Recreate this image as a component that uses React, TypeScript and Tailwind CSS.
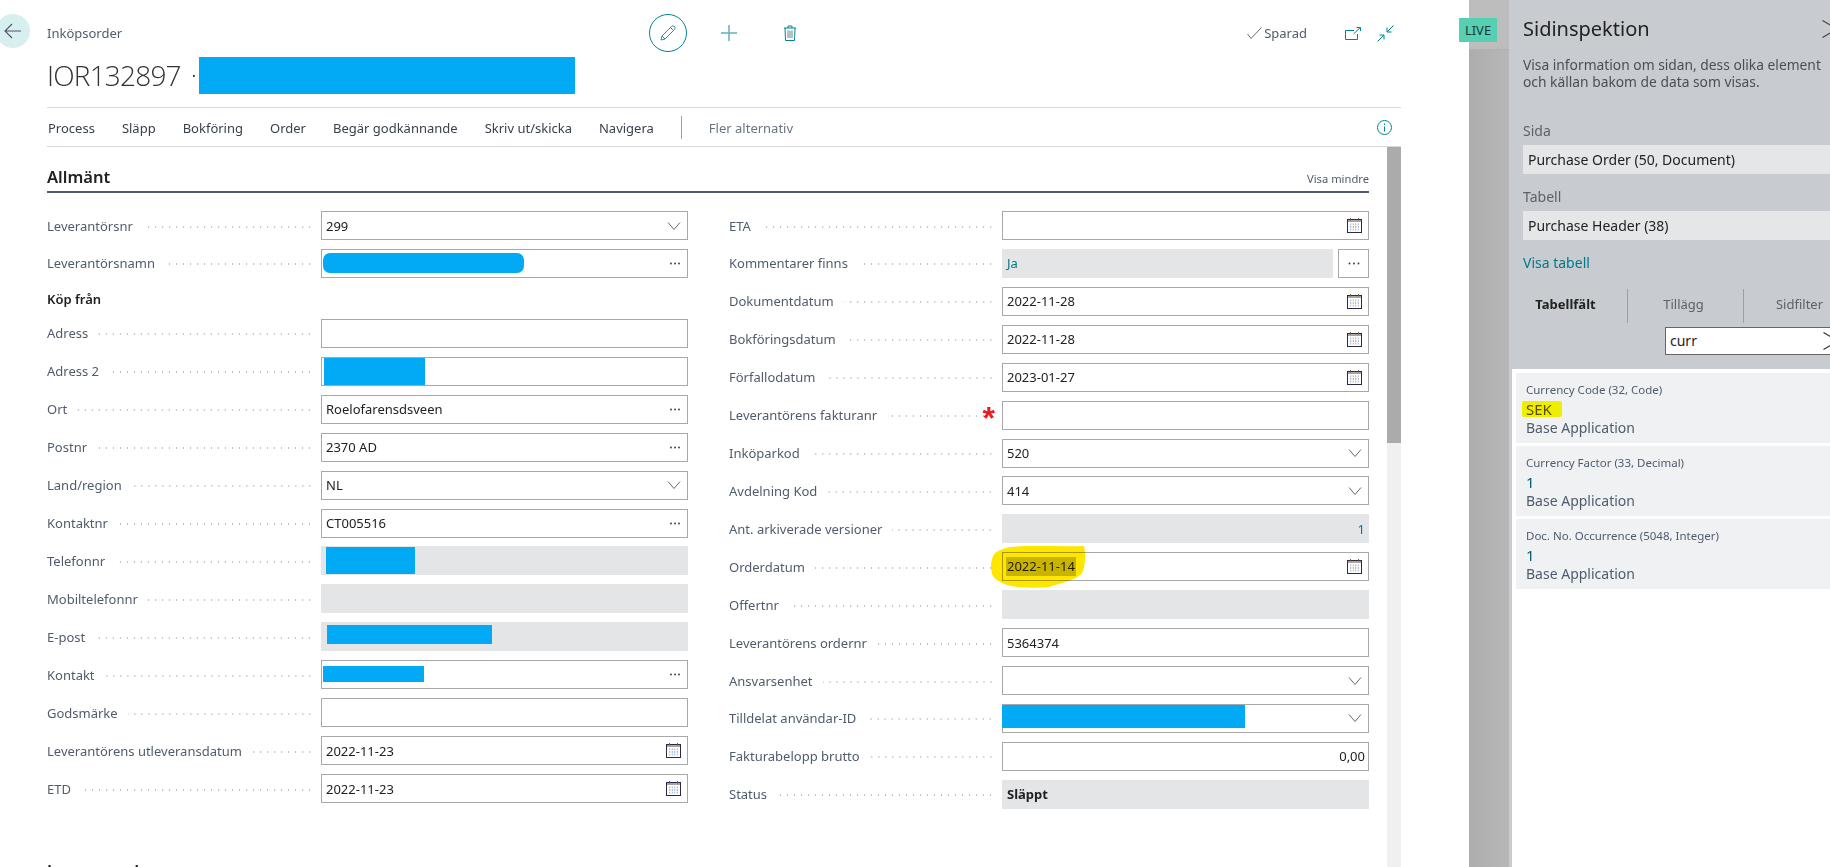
import React from "react";

const Chevron = () => (
  <svg width="14" height="8" viewBox="0 0 14 8" fill="none" stroke="#5f6b78" strokeWidth="1"><path d="M1 .5 7 7.500 13 .5" /></svg>
);
const More = ({ wide }: { wide?: boolean }) => (
  <svg width="12" height="3" viewBox="0 0 12 3" fill="#333"><circle cx={wide ? 1.500 : 2} cy="1.500" r=".9" /><circle cx="6" cy="1.500" r=".9" /><circle cx={wide ? 10.500 : 10} cy="1.500" r=".9" /></svg>
);
const Calendar = () => (
  <svg width="15" height="15" viewBox="0 0 15 15" fill="none">
    <rect x=".5" y="1.500" width="14" height="13" fill="#fff" stroke="#2b2a44" />
    <rect x="1" y="2" width="13" height="2" fill="#a8a4a0" />
    <path d="M3.500 0v2.500M11.500 0v2.500" stroke="#6b5a55" />
    <path d="M3.500 5.500v7M6.500 5.500v7M8.500 5.500v7M11.500 5.500v7" stroke="#a9c4e6" strokeWidth="1" />
    <path d="M5 5.500v7M10 5.500v7" stroke="#ecd9bf" strokeWidth="1" />
    <path d="M2 7.500h11M2 10.500h11" stroke="#ffffff" strokeWidth=".7" />
  </svg>
);

type Kind = "chevron" | "more" | "cal" | undefined;
type F = { label: string; value?: string; ro?: boolean; icon?: Kind; redact?: string; req?: boolean; right?: boolean; bold?: boolean; teal?: boolean; comment?: boolean; mark?: boolean };

const Field = ({ f }: { f: F }) => (
  <div className="flex h-[29px] items-center relative">
    <span className="whitespace-nowrap text-[#505c6d] pr-[10px]">{f.label}</span>
    <span className="flex-1 h-[2px] bg-[radial-gradient(circle,#b9bdc3_0.9px,transparent_1px)] bg-[length:7px_2px] bg-repeat-x bg-right mt-[2px]" />
    {f.req ? (
      <span className="absolute right-[374px] top-[-3px] text-[#e81c1c] text-[32px] font-bold leading-[40px] font-['Liberation_Sans',sans-serif]">*</span>
    ) : null}
    <div className="w-[367px] ml-[8px] shrink-0 flex gap-[5px] h-full">
      <div
        className={
          "flex-1 flex items-center h-full text-[#212121] relative border " +
          (f.ro ? "bg-[#e4e5e7] border-[#e4e5e7]" : "bg-white border-[#a8a8a8]")
        }
      >
        {f.redact ? <div className={f.redact} /> : null}
        {f.value ? (
          <span
            className={
              "flex-1 px-[4px] " +
              (f.right ? "text-right pr-[3px] " : "") +
              (f.bold ? "font-bold " : "") +
              (f.teal ? "text-[#00798a] " : "")
            }
          >
            {f.mark ? <span className="bg-[#c8c8c8] inline-block leading-[19px] -ml-px px-px">{f.value}</span> : f.value}
          </span>
        ) : (
          <span className="flex-1" />
        )}
        {f.icon ? (
          <span className="w-[24px] pr-[6px] flex justify-end items-center shrink-0">
            {f.icon === "chevron" ? <Chevron /> : f.icon === "more" ? <More /> : <Calendar />}
          </span>
        ) : null}
      </div>
      {f.comment ? (
        <div className="w-[31px] border border-[#a8a8a8] bg-white flex items-center justify-center"><More wide /></div>
      ) : null}
    </div>
  </div>
);

const left1: F[] = [
  { label: "Leverantörsnr", value: "299", icon: "chevron" },
  { label: "Leverantörsnamn", icon: "more", redact: "w-[201px] h-[20px] ml-[1px] rounded-[7px] bg-[#02a9f4]" },
];
const left2: F[] = [
  { label: "Adress" },
  { label: "Adress 2", redact: "w-[101px] h-[27px] ml-[2px] bg-[#02a9f4]" },
  { label: "Ort", value: "Roelofarensdsveen", icon: "more" },
  { label: "Postnr", value: "2370 AD", icon: "more" },
  { label: "Land/region", value: "NL", icon: "chevron" },
  { label: "Kontaktnr", value: "CT005516", icon: "more" },
  { label: "Telefonnr", ro: true, redact: "w-[89px] h-[27px] ml-[4px] bg-[#02a9f4]" },
  { label: "Mobiltelefonnr", ro: true },
  { label: "E-post", ro: true, redact: "w-[165px] h-[19px] ml-[5px] -mt-[5px] bg-[#02a9f4]" },
  { label: "Kontakt", icon: "more", redact: "w-[101px] h-[16px] ml-[1px] -mt-[2px] bg-[#02a9f4]" },
  { label: "Godsmärke" },
  { label: "Leverantörens utleveransdatum", value: "2022-11-23", icon: "cal" },
  { label: "ETD", value: "2022-11-23", icon: "cal" },
];
const right: F[] = [
  { label: "ETA", icon: "cal" },
  { label: "Kommentarer finns", value: "Ja", ro: true, teal: true, comment: true },
  { label: "Dokumentdatum", value: "2022-11-28", icon: "cal" },
  { label: "Bokföringsdatum", value: "2022-11-28", icon: "cal" },
  { label: "Förfallodatum", value: "2023-01-27", icon: "cal" },
  { label: "Leverantörens fakturanr", req: true },
  { label: "Inköparkod", value: "520", icon: "chevron" },
  { label: "Avdelning Kod", value: "414", icon: "chevron" },
  { label: "Ant. arkiverade versioner", value: "1", ro: true, right: true, teal: true },
  { label: "Orderdatum", value: "2022-11-14", icon: "cal", mark: true },
  { label: "Offertnr", ro: true },
  { label: "Leverantörens ordernr", value: "5364374" },
  { label: "Ansvarsenhet", icon: "chevron" },
  { label: "Tilldelat användar-ID", icon: "chevron", redact: "w-[243px] h-[23px] -ml-px -mt-[3px] bg-[#02a9f4]" },
  { label: "Fakturabelopp brutto", value: "0,00", right: true },
  { label: "Status", value: "Släppt", ro: true, bold: true },
];
const menu = ["Process", "Släpp", "Bokföring", "Order", "Begär godkännande", "Skriv ut/skicka", "Navigera"];
const cards = [
  { t: "Currency Code (32, Code)", v: "SEK", h: true },
  { t: "Currency Factor (33, Decimal)", v: "1" },
  { t: "Doc. No. Occurrence (5048, Integer)", v: "1" },
];

export default function App() {
  return (
    <div className="flex w-[1830px] h-[867px] overflow-hidden bg-white text-[13px] leading-[18px] font-['Noto_Sans','Open_Sans',sans-serif] relative">
      <main className="w-[1469px] shrink-0 flex flex-col h-full overflow-hidden">
        <div className="flex h-[147px] shrink-0">
          <div className="w-[34px] h-[34px] -ml-[4px] mt-[14px] rounded-full bg-[#d8eff1] flex items-center justify-center shrink-0">
            <svg width="18" height="16" viewBox="0 0 18 16" fill="none" stroke="#4b5563" strokeWidth="1.100"><path d="M17 8H1M8 1 1 8l7 7" /></svg>
          </div>
          <div className="ml-[17px] w-[1354px] shrink-0 flex flex-col">
            <div className="flex items-center h-[38px] mt-[14px]">
              <span className="w-[602px] text-[#505c6d] -mt-[1px]">Inköpsorder</span>
              <div className="w-[38px] h-[38px] rounded-full border border-[#00848f] flex items-center justify-center">
                <svg width="18" height="18" viewBox="0 0 18 18" fill="none" stroke="#2a8f97" strokeWidth="1"><path d="M2 16l1-4 9.500-9.500a2 2 0 0 1 3 3L6 15zM3 12l3 3M11.500 3.500l3 3" /></svg>
              </div>
              <div className="ml-[34px] w-[16px] h-[16px] flex items-center justify-center">
                <svg width="16" height="16" viewBox="0 0 16 16" stroke="#5fb4b8" strokeWidth="1.500"><path d="M8 0v16M0 8h16" /></svg>
              </div>
              <div className="ml-[47px]">
                <svg width="12" height="16" viewBox="0 0 12 16" fill="none" stroke="#00848f" strokeWidth="1"><path d="M0 3h12M4 3V1h4v2M1 3l.5 12.500h9L11 3" /><path d="M4 5.500v7.500M6 5.500v7.500M8 5.500v7.500" stroke="#6d7f82" /></svg>
              </div>
              <div className="ml-auto flex items-center pr-[7px]">
                <svg width="15" height="12" viewBox="0 0 15 12" fill="none" stroke="#505c6d" strokeWidth=".9"><path d="M.5 7 4 11.500 14.500 .5" /></svg>
                <span className="ml-[2px] text-[#505c6d]">Sparad</span>
                <svg className="ml-[38px]" width="16" height="13" viewBox="0 0 16 13" fill="none" stroke="#00848f" strokeWidth="1"><path d="M9 3.500H.5v9h12V7M8.500 7 15 .8M11.500 .5H15.500V4" /></svg>
                <svg className="ml-[16px]" width="17" height="17" viewBox="0 0 17 17" fill="none" stroke="#00848f" strokeWidth="1"><path d="M16.500 .5 10 7M10 2.500V7h4.500M.5 16.500 7 10M2.500 10H7v4.500" /></svg>
              </div>
            </div>
            <div className="flex items-center h-[37px] mt-[5px]">
              <span className="text-[28px] leading-[37px] font-light text-[#333] font-['Open_Sans',sans-serif] tracking-[-0.8px]">IOR132897</span>
              <span className="ml-[11px] text-[16px] text-[#333]">·</span>
              <div className="ml-[3px] w-[376px] h-[37px] bg-[#02a9f4]" />
            </div>
            <div className="mt-[13px] h-[40px] border-y border-[#d8d8de] flex items-center">
              {menu.map((m) => (
                <span key={m} className="text-[#39414d] mr-[27px] first:ml-px pt-px">{m}</span>
              ))}
              <span className="w-px h-[23px] bg-[#9aa0a8] mr-[27px]" />
              <span className="text-[#6a7480] pt-px">Fler alternativ</span>
              <svg className="ml-auto mr-[9px]" width="15" height="15" viewBox="0 0 15 15" fill="none" stroke="#00848f" strokeWidth="1"><circle cx="7.500" cy="7.500" r="7" /><path d="M7.500 6.500V11.500M7.500 3.500v1.500" /></svg>
            </div>
          </div>
        </div>
        <div className="flex flex-1 min-h-0">
          <div className="ml-[47px] w-[1322px] shrink-0 flex flex-col">
            <div className="h-[46px] shrink-0 border-b-2 border-[#505c6d] flex items-end justify-between pb-[3px]">
              <span className="text-[16.500px] leading-[24px] font-semibold text-[#212121] -mb-[1px]">Allmänt</span>
              <span className="text-[11.200px] text-[#505c6d] leading-[16px] mb-[1px]">Visa mindre</span>
            </div>
            <div className="grid grid-cols-[641px_640px] gap-x-[41px] mt-[18px]">
              <div className="flex flex-col gap-[8.930px]">
                {left1.map((f) => <Field key={f.label} f={f} />)}
                <div className="h-[23.200px] pt-[2px] flex items-center font-semibold text-[#212121]">Köp från</div>
                {left2.map((f) => <Field key={f.label} f={f} />)}
              </div>
              <div className="flex flex-col gap-[8.930px] relative">
                {right.map((f) => <Field key={f.label} f={f} />)}
                <svg className="absolute left-[262px] top-[335px] mix-blend-multiply pointer-events-none" width="95" height="43" viewBox="0 0 95 43">
                  <path d="M19 1C45-1 70 1 93 0 95 8 94 20 92 25 90 33 70 37 58 41 48 42 30 42 20 40 12 38 3 34 1 28-1 20 0 12 4 7 8 4 14 2 19 1Z" fill="#ffe600" />
                </svg>
              </div>
            </div>
            <div className="text-[16.500px] leading-[24px] font-semibold text-[#212121] mt-[50px]">Leveransadress</div>
          </div>
          <div className="ml-[18px] w-[14px] shrink-0 bg-[#f0f0f0]">
            <div className="h-[296px] bg-[#ababab]" />
          </div>
        </div>
      </main>
      <div className="w-[40px] shrink-0 h-full bg-gradient-to-r from-[#adadad] to-[#b7b7b7] relative">
        <div className="h-[50px] bg-[#bdbdbd] border-b border-[#b2b2b2]" />
        <div className="absolute -left-[10px] top-[18px] w-[38px] h-[24px] bg-[#56cfb2] flex items-center justify-center text-[#1d3a34] text-[13px]">LIVE</div>
      </div>
      <aside className="w-[321px] shrink-0 h-full bg-[#c8cbd0] overflow-hidden">
        <div className="w-[360px] pl-[14px]">
          <div className="flex items-center h-[30px] mt-[14px]">
            <span className="text-[20px] leading-[30px] text-[#222]">Sidinspektion</span>
            <svg className="absolute left-[1822px] top-[20px]" width="16" height="18" viewBox="0 0 16 18" fill="none" stroke="#444" strokeWidth="1.200"><path d="M.5 .5 15 9 .5 17.500" /></svg>
          </div>
          <p className="w-[310px] text-[13.800px] leading-[17px] text-[#4a4f57] mt-[12px]">Visa information om sidan, dess olika element och källan bakom de data som visas.</p>
          <div className="text-[14px] text-[#5c626b] mt-[32px] leading-[18px]">Sida</div>
          <div className="mt-[5px] h-[29px] bg-[#e5e6e8] flex items-center pl-[5px] text-[#222] text-[14px]">Purchase Order (50, Document)</div>
          <div className="text-[14px] text-[#5c626b] mt-[14px] leading-[18px]">Tabell</div>
          <div className="mt-[5px] h-[29px] bg-[#e5e6e8] flex items-center pl-[5px] text-[#222] text-[14px]">Purchase Header (38)</div>
          <div className="text-[14px] text-[#00798a] mt-[14px] leading-[18px]">Visa tabell</div>
          <div className="flex h-[34px] mt-[17px] items-stretch -ml-[14px]">
            <div className="w-[118px] flex items-center justify-center pb-[4px] pr-[5px] font-bold text-[#222]">Tabellfält</div>
            <div className="w-[116px] border-l border-[#9aa0a8] flex items-center justify-center pb-[4px] pr-[4px] text-[#5c626b]">Tillägg</div>
            <div className="w-[116px] border-l border-[#9aa0a8] flex items-center justify-center pb-[4px] text-[#5c626b] pr-[4px]">Sidfilter</div>
          </div>
          <div className="ml-[142px] mt-[4px] w-[200px] h-[28px] bg-white border border-[#666] flex items-center pl-[4px] text-[#222] text-[14px] relative">
            curr
            <svg className="absolute left-[157px] top-[4px]" width="16" height="18" viewBox="0 0 16 18" fill="none" stroke="#333" strokeWidth="1.200"><path d="M.5 .5 15 9 .5 17.500" /></svg>
          </div>
        </div>
        <div className="ml-[3px] mt-[14px] h-[498px] bg-white pl-[4px] pt-[4px] flex flex-col gap-[3px]">
          {cards.map((c) => (
            <div key={c.t} className="h-[70px] bg-[#eff1f3] pl-[10px] pt-[8px]">
              <div className="text-[11.500px] leading-[18px] text-[#505c6d]">{c.t}</div>
              <div className="text-[15px] leading-[20px] text-[#00606b]">
                {c.h ? <span className="bg-[#f0ee00] text-[#5a4a00] inline-block rounded-[2px] -ml-[4px] pl-[4px] pr-[10px] leading-[16px]">{c.v}</span> : c.v}
              </div>
              <div className="text-[14px] leading-[17px] text-[#505c6d]">Base Application</div>
            </div>
          ))}
        </div>
      </aside>
    </div>
  );
}
